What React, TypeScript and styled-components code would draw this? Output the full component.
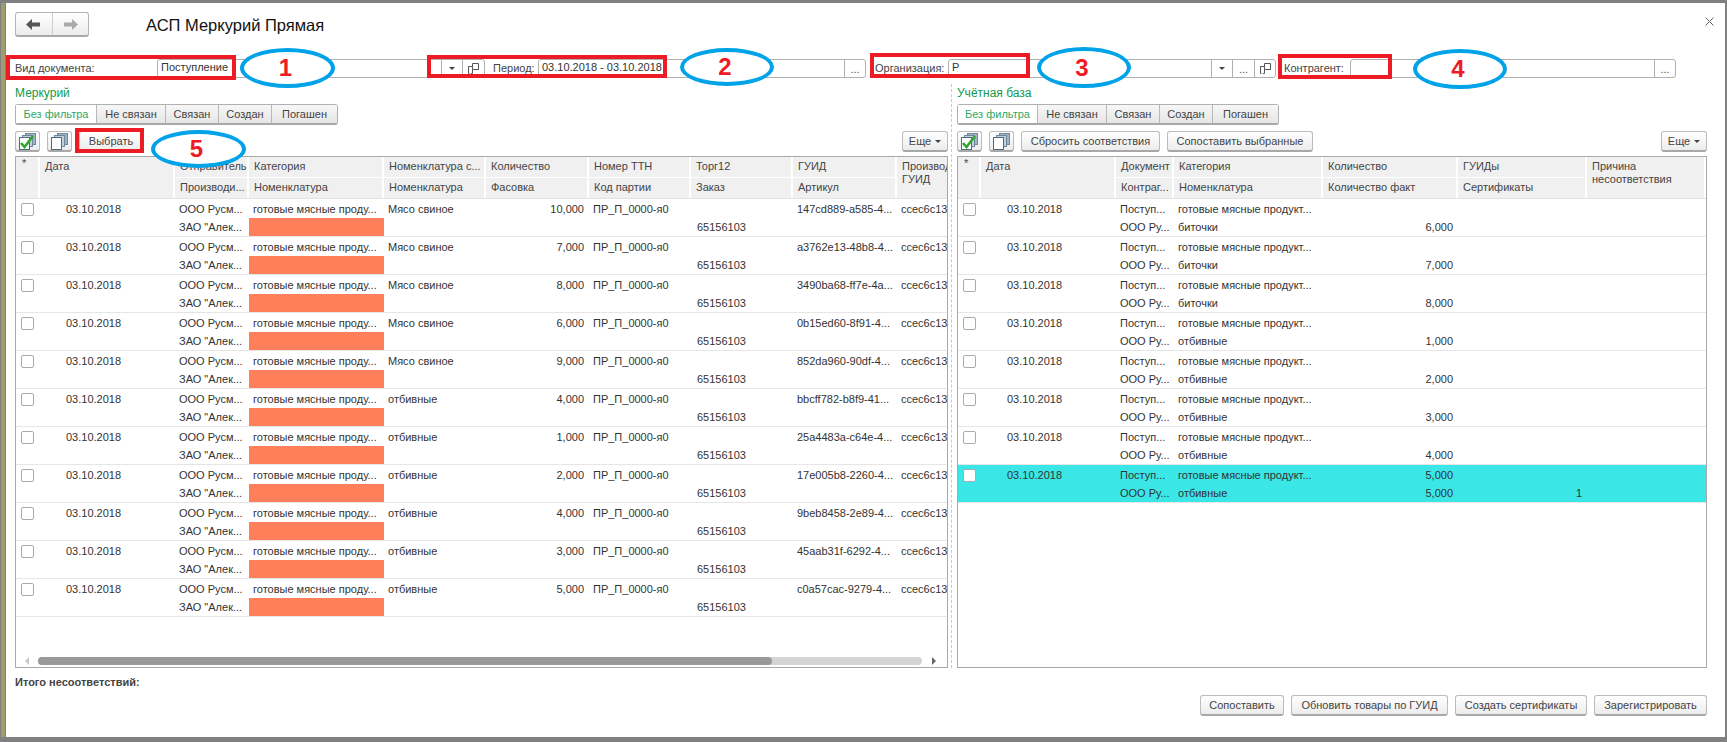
import styled, { createGlobalStyle } from "styled-components";

const GlobalStyle = createGlobalStyle`
  html, body { margin: 0; padding: 0; background: #fff; }
  body { font-family: "Liberation Sans", Arial, sans-serif; font-size: 11px; color: #333; }
  * { box-sizing: border-box; }
`;

const LEFT_COLS = "24px 135px 74px 135px 102px 103px 102px 102px 104px 80px";
const RIGHT_COLS = "23px 135px 58px 149px 135px 129px 119px";

const leftRows = [
  ["10,000", "Мясо свиное", "147cd889-a585-4..."],
  ["7,000", "Мясо свиное", "a3762e13-48b8-4..."],
  ["8,000", "Мясо свиное", "3490ba68-ff7e-4a..."],
  ["6,000", "Мясо свиное", "0b15ed60-8f91-4..."],
  ["9,000", "Мясо свиное", "852da960-90df-4..."],
  ["4,000", "отбивные", "bbcff782-b8f9-41..."],
  ["1,000", "отбивные", "25a4483a-c64e-4..."],
  ["2,000", "отбивные", "17e005b8-2260-4..."],
  ["4,000", "отбивные", "9beb8458-2e89-4..."],
  ["3,000", "отбивные", "45aab31f-6292-4..."],
  ["5,000", "отбивные", "c0a57cac-9279-4..."],
];

const rightRows = [
  ["6,000", "биточки"],
  ["7,000", "биточки"],
  ["8,000", "биточки"],
  ["1,000", "отбивные"],
  ["2,000", "отбивные"],
  ["3,000", "отбивные"],
  ["4,000", "отбивные"],
];

const redBoxes = [
  { x: 6, y: 55, w: 230, h: 25 },
  { x: 427, y: 55, w: 240, h: 23 },
  { x: 870, y: 53, w: 160, h: 25 },
  { x: 1278, y: 54, w: 114, h: 25 },
  { x: 75, y: 128, w: 69, h: 25 },
];

const callouts = [
  { n: 1, x: 240, y: 48, w: 95, h: 40 },
  { n: 2, x: 680, y: 48, w: 94, h: 38 },
  { n: 3, x: 1037, y: 47, w: 94, h: 41 },
  { n: 4, x: 1413, y: 49, w: 94, h: 40 },
  { n: 5, x: 151, y: 130, w: 95, h: 38 },
];

const BackArrow = ({ color }: { color: string }) => (
  <svg width="15" height="11" viewBox="0 0 15 11">
    <path d="M0 5.5 L6 0 V3.5 H14 V7.5 H6 V11 Z" fill={color} />
  </svg>
);

const ForwardArrow = ({ color }: { color: string }) => (
  <svg width="15" height="11" viewBox="0 0 15 11">
    <path d="M15 5.5 L9 0 V3.5 H1 V7.5 H9 V11 Z" fill={color} />
  </svg>
);

const OpenIcon = () => (
  <svg width="11" height="11" viewBox="0 0 11 11" fill="none" stroke="#555">
    <path d="M4.5 .5 H10.5 V6.5 H4.5 Z" />
    <path d="M4.5 3.5 H.5 V10.5 H1.5 M4.5 6.5 V10.5 H3" />
  </svg>
);

const CloseIcon = () => (
  <svg width="9" height="9" viewBox="0 0 9 9" stroke="#666" strokeWidth="1">
    <path d="M.5 .5 L8.5 8.5 M8.5 .5 L.5 8.5" />
  </svg>
);

const DocsIcon = ({ checked }: { checked?: boolean }) => (
  <svg width="18" height="17" viewBox="0 0 18 17">
    <rect x="6.5" y=".5" width="10" height="11" fill="#9fb4c4" stroke="#6f8798" />
    <rect x="3.5" y="2.5" width="10" height="11" fill="#c3d0da" stroke="#6f8798" />
    <rect x=".5" y="4.5" width="10" height="12" fill="#fff" stroke="#4f6b80" />
    {checked && (
      <path d="M2 10 L5.5 14 L14 3" fill="none" stroke="#2fa52f" strokeWidth="2.6" />
    )}
  </svg>
);

const Caret = styled.span`
  width: 0;
  height: 0;
  border-left: 3px solid transparent;
  border-right: 3px solid transparent;
  border-top: 3px solid #444;
`;

const App = () => (
  <Page>
    <GlobalStyle />
    <Sheet>
      <TitleBar>
        <NavGroup>
          <NavButton>
            <BackArrow color="#555" />
          </NavButton>
          <NavButton $next>
            <ForwardArrow color="#aaa" />
          </NavButton>
        </NavGroup>
        <Title>АСП Меркурий Прямая</Title>
        <CloseMark>
          <CloseIcon />
        </CloseMark>
      </TitleBar>

      <FilterRow>
        <FilterLabel $w={142}>Вид документа:</FilterLabel>
        <Field $w={328}>
          <FieldValue>Поступление</FieldValue>
          <FieldButton $w={21}>
            <Caret />
          </FieldButton>
          <FieldButton $w={22}>
            <OpenIcon />
          </FieldButton>
        </Field>
        <FilterLabel $w={45} $gap={8}>
          Период:
        </FilterLabel>
        <Field $w={328}>
          <FieldValue>03.10.2018 - 03.10.2018</FieldValue>
          <FieldButton $w={21}>...</FieldButton>
        </Field>
        <FilterLabel $w={73} $gap={9}>
          Организация:
        </FilterLabel>
        <Field $w={328}>
          <FieldValue>Р</FieldValue>
          <FieldButton $w={21}>
            <Caret />
          </FieldButton>
          <FieldButton $w={22}>...</FieldButton>
          <FieldButton $w={21}>
            <OpenIcon />
          </FieldButton>
        </Field>
        <FilterLabel $w={66} $gap={8}>
          Контрагент:
        </FilterLabel>
        <Field $w={326}>
          <FieldValue />
          <FieldButton $w={21}>...</FieldButton>
        </Field>
      </FilterRow>

      <Panels>
        <Panel $w={933}>
          <PanelTitle>Меркурий</PanelTitle>
          <Tabs>
            <Tab $w={80} $active>
              Без фильтра
            </Tab>
            <Tab $w={69}>Не связан</Tab>
            <Tab $w={53}>Связан</Tab>
            <Tab $w={53}>Создан</Tab>
            <Tab $w={66}>Погашен</Tab>
          </Tabs>
          <Toolbar>
            <IconButton>
              <DocsIcon checked />
            </IconButton>
            <IconButton>
              <DocsIcon />
            </IconButton>
            <PlainButton $w={64}>Выбрать</PlainButton>
            <MoreButton>
              Еще <Caret />
            </MoreButton>
          </Toolbar>
          <Table>
            <HeaderGrid $cols={LEFT_COLS}>
              <HeadCell $span $star>
                *
              </HeadCell>
              <HeadCell $span>Дата</HeadCell>
              <HeadCell>Отправитель</HeadCell>
              <HeadCell>Производи...</HeadCell>
              <HeadCell>Категория</HeadCell>
              <HeadCell>Номенклатура</HeadCell>
              <HeadCell>Номенклатура с...</HeadCell>
              <HeadCell>Номенклатура</HeadCell>
              <HeadCell>Количество</HeadCell>
              <HeadCell>Фасовка</HeadCell>
              <HeadCell>Номер ТТН</HeadCell>
              <HeadCell>Код партии</HeadCell>
              <HeadCell>Торг12</HeadCell>
              <HeadCell>Заказ</HeadCell>
              <HeadCell>ГУИД</HeadCell>
              <HeadCell>Артикул</HeadCell>
              <HeadCell $span>Производитель ГУИД</HeadCell>
            </HeaderGrid>
            {leftRows.map(([qty, name, guid]) => (
              <Row key={guid} $cols={LEFT_COLS}>
                <CheckCell>
                  <Checkbox />
                </CheckCell>
                <Cell />
                <DateCell>03.10.2018</DateCell>
                <Cell />
                <Cell>ООО Русм...</Cell>
                <Cell>ЗАО "Алек...</Cell>
                <Cell>готовые мясные проду...</Cell>
                <Cell $fill="#ff7f5a" />
                <Cell>{name}</Cell>
                <Cell />
                <Cell $right>{qty}</Cell>
                <Cell />
                <Cell>ПР_П_0000-я0</Cell>
                <Cell />
                <Cell />
                <Cell $inset={6}>65156103</Cell>
                <Cell>{guid}</Cell>
                <Cell />
                <Cell>ccec6c13</Cell>
                <Cell />
              </Row>
            ))}
            <Scrollbar>
              <ScrollArrow $dir="left" />
              <ScrollTrack>
                <ScrollThumb />
              </ScrollTrack>
              <ScrollArrow $dir="right" />
            </Scrollbar>
          </Table>
        </Panel>

        <Splitter />

        <Panel $w={750}>
          <PanelTitle>Учётная база</PanelTitle>
          <Tabs>
            <Tab $w={79} $active>
              Без фильтра
            </Tab>
            <Tab $w={69}>Не связан</Tab>
            <Tab $w={53}>Связан</Tab>
            <Tab $w={53}>Создан</Tab>
            <Tab $w={66}>Погашен</Tab>
          </Tabs>
          <Toolbar>
            <IconButton>
              <DocsIcon checked />
            </IconButton>
            <IconButton>
              <DocsIcon />
            </IconButton>
            <PlainButton $w={139}>Сбросить соответствия</PlainButton>
            <PlainButton $w={146}>Сопоставить выбранные</PlainButton>
            <MoreButton>
              Еще <Caret />
            </MoreButton>
          </Toolbar>
          <Table>
            <HeaderGrid $cols={RIGHT_COLS}>
              <HeadCell $span $star>
                *
              </HeadCell>
              <HeadCell $span>Дата</HeadCell>
              <HeadCell>Документ</HeadCell>
              <HeadCell>Контраг...</HeadCell>
              <HeadCell>Категория</HeadCell>
              <HeadCell>Номенклатура</HeadCell>
              <HeadCell>Количество</HeadCell>
              <HeadCell>Количество факт</HeadCell>
              <HeadCell>ГУИДы</HeadCell>
              <HeadCell>Сертификаты</HeadCell>
              <HeadCell $span>Причина несоответствия</HeadCell>
            </HeaderGrid>
            {rightRows.map(([qty, name], i) => (
              <Row key={i} $cols={RIGHT_COLS}>
                <CheckCell>
                  <Checkbox />
                </CheckCell>
                <Cell />
                <DateCell>03.10.2018</DateCell>
                <Cell />
                <Cell>Поступ...</Cell>
                <Cell>ООО Ру...</Cell>
                <Cell>готовые мясные продукт...</Cell>
                <Cell>{name}</Cell>
                <Cell />
                <Cell $right>{qty}</Cell>
              </Row>
            ))}
            <Row $cols={RIGHT_COLS} $selected>
              <CheckCell>
                <Checkbox />
              </CheckCell>
              <Cell />
              <DateCell>03.10.2018</DateCell>
              <Cell />
              <Cell>Поступ...</Cell>
              <Cell>ООО Ру...</Cell>
              <Cell>готовые мясные продукт...</Cell>
              <Cell>отбивные</Cell>
              <Cell $right>5,000</Cell>
              <Cell $right>5,000</Cell>
              <Cell />
              <Cell $right>1</Cell>
            </Row>
          </Table>
        </Panel>
      </Panels>

      <Summary>Итого несоответствий:</Summary>

      <Actions>
        <PlainButton $w={84}>Сопоставить</PlainButton>
        <PlainButton $w={157}>Обновить товары по ГУИД</PlainButton>
        <PlainButton $w={132}>Создать сертификаты</PlainButton>
        <PlainButton $w={113}>Зарегистрировать</PlainButton>
      </Actions>
    </Sheet>

    {redBoxes.map((b) => (
      <RedBox key={b.x} $x={b.x} $y={b.y} $w={b.w} $h={b.h} />
    ))}
    {callouts.map((c) => (
      <Callout key={c.n} $x={c.x} $y={c.y} $w={c.w} $h={c.h}>
        {c.n}
      </Callout>
    ))}
  </Page>
);

const Page = styled.div`
  position: relative;
  width: 1727px;
  height: 742px;
  overflow: hidden;
  background: #808080;
  padding: 3px 2px 5px 1px;
`;

const Sheet = styled.div`
  height: 100%;
  background: #fff;
  border-left: 4px solid #a09d6f;
  padding: 9px 18px 0 10px;
  display: flex;
  flex-direction: column;
  box-shadow: inset 1px 0 0 #808080;
`;

const TitleBar = styled.div`
  display: flex;
  align-items: center;
  height: 25px;
`;

const NavGroup = styled.div`
  display: flex;
  width: 74px;
  height: 25px;
  border: 1px solid #b5b5b5;
  border-bottom: 2px solid #a8a8a8;
  border-radius: 3px;
  background: linear-gradient(#fff, #ececec);
`;

const NavButton = styled.div<{ $next?: boolean }>`
  flex: 1;
  display: flex;
  align-items: center;
  justify-content: center;
  border-left: ${(p) => (p.$next ? "1px solid #cfcfcf" : "none")};
`;

const Title = styled.h1`
  margin: 1px 0 0 57px;
  font-size: 16.5px;
  font-weight: 400;
  color: #111;
`;

const CloseMark = styled.span`
  display: flex;
  margin-left: auto;
  margin-right: -7px;
  margin-top: -6px;
`;

const FilterRow = styled.div`
  display: flex;
  align-items: center;
  height: 19px;
  margin-top: 22px;
`;

const FilterLabel = styled.span<{ $w: number; $gap?: number }>`
  flex: none;
  width: ${(p) => p.$w}px;
  margin: 0 0 1px ${(p) => p.$gap ?? 0}px;
  white-space: nowrap;
  color: #444;
`;

const Field = styled.div<{ $w: number }>`
  flex: none;
  display: flex;
  width: ${(p) => p.$w}px;
  height: 19px;
  border: 1px solid #b0b0b0;
  border-radius: 3px;
  background: #fff;
`;

const FieldValue = styled.div`
  flex: 1;
  padding-left: 3px;
  line-height: 15px;
  color: #333;
`;

const FieldButton = styled.div<{ $w: number }>`
  flex: none;
  width: ${(p) => p.$w}px;
  display: flex;
  align-items: center;
  justify-content: center;
  border-left: 1px solid #b0b0b0;
  color: #555;
`;

const Panels = styled.div`
  display: flex;
  height: 584px;
  margin-top: 6px;
`;

const Panel = styled.section<{ $w: number }>`
  flex: none;
  width: ${(p) => p.$w}px;
  display: flex;
  flex-direction: column;
`;

const Splitter = styled.div`
  flex: none;
  width: 1px;
  margin: 0 5px 0 3px;
  border-left: 1px dashed #c8c8c8;
`;

const PanelTitle = styled.div`
  height: 20px;
  font-size: 12px;
  line-height: 18px;
  color: #119a4d;
`;

const Tabs = styled.div`
  display: flex;
  align-self: flex-start;
  height: 21px;
  border: 1px solid #b0b0b0;
  border-bottom: 2px solid #a8a8a8;
  border-radius: 3px;
`;

const Tab = styled.div<{ $w: number; $active?: boolean }>`
  width: ${(p) => p.$w}px;
  text-align: center;
  line-height: 18px;
  color: ${(p) => (p.$active ? "#2ea866" : "#444")};
  background: ${(p) => (p.$active ? "#fff" : "linear-gradient(#f7f7f7, #e6e6e6)")};
  & + & {
    border-left: 1px solid #b8b8b8;
  }
`;

const Toolbar = styled.div`
  display: flex;
  align-items: center;
  gap: 7px;
  height: 21px;
  margin-top: 6px;
`;

const IconButton = styled.div`
  flex: none;
  display: flex;
  align-items: center;
  justify-content: center;
  width: 25px;
  height: 21px;
  border: 1px solid #bcbcbc;
  border-bottom: 2px solid #a8a8a8;
  border-radius: 3px;
  background: linear-gradient(#fff, #ececec);
`;

const PlainButton = styled.div<{ $w: number }>`
  flex: none;
  width: ${(p) => p.$w}px;
  height: 21px;
  text-align: center;
  line-height: 18px;
  white-space: nowrap;
  color: #444;
  border: 1px solid #bcbcbc;
  border-bottom: 2px solid #a8a8a8;
  border-radius: 3px;
  background: linear-gradient(#fff, #ececec);
`;

const MoreButton = styled.div`
  flex: none;
  display: flex;
  align-items: center;
  justify-content: center;
  gap: 4px;
  width: 46px;
  height: 21px;
  margin-left: auto;
  color: #444;
  border: 1px solid #bcbcbc;
  border-bottom: 2px solid #a8a8a8;
  border-radius: 3px;
  background: linear-gradient(#fff, #ececec);
`;

const Table = styled.div`
  display: flex;
  flex-direction: column;
  height: 512px;
  margin-top: 4px;
  overflow: hidden;
  border: 1px solid #a9a9a9;
  background: #fff;
`;

const HeaderGrid = styled.div<{ $cols: string }>`
  flex: none;
  display: grid;
  grid-auto-flow: column;
  grid-template-columns: ${(p) => p.$cols};
  grid-template-rows: 20px 20px;
  row-gap: 1px;
  height: 42px;
  border-bottom: 1px solid #e2e2e2;
`;

const HeadCell = styled.div<{ $span?: boolean; $star?: boolean }>`
  grid-row: ${(p) => (p.$span ? "span 2" : "auto")};
  overflow: hidden;
  padding: ${(p) => (p.$star ? "0 0 0 6px" : "3px 0 0 5px")};
  line-height: 13px;
  color: #444;
  background: #f0f0f0;
  border-right: 2px solid #fff;
  white-space: ${(p) => (p.$span ? "normal" : "nowrap")};
`;

const Row = styled.div<{ $cols: string; $selected?: boolean }>`
  flex: none;
  display: grid;
  grid-auto-flow: column;
  grid-template-columns: ${(p) => p.$cols};
  grid-template-rows: 19px 18px;
  height: 38px;
  border-bottom: 1px solid #e6e6e6;
  background: ${(p) => (p.$selected ? "#3ae6e6" : "#fff")};
`;

const Cell = styled.div<{ $right?: boolean; $fill?: string; $inset?: number }>`
  padding: 0 ${(p) => (p.$right ? 5 : 0)}px 0 ${(p) => p.$inset ?? 4}px;
  overflow: hidden;
  line-height: 19px;
  white-space: nowrap;
  text-align: ${(p) => (p.$right ? "right" : "left")};
  background: ${(p) => p.$fill ?? "transparent"};
  color: #333;
  &:nth-child(odd) {
    line-height: 20px;
  }
`;

const DateCell = styled(Cell)`
  padding-left: 26px;
`;

const CheckCell = styled.div`
  padding: 4px 0 0 5px;
`;

const Checkbox = styled.div`
  width: 13px;
  height: 13px;
  border: 1px solid #aaa;
  border-radius: 2px;
  background: #fff;
`;

const Scrollbar = styled.div`
  display: flex;
  align-items: center;
  height: 8px;
  margin-top: auto;
  margin-bottom: 2px;
`;

const ScrollArrow = styled.span<{ $dir: "left" | "right" }>`
  flex: none;
  width: 0;
  height: 0;
  margin: ${(p) => (p.$dir === "left" ? "0 9px 0 9px" : "0 0 0 10px")};
  border-top: 4px solid transparent;
  border-bottom: 4px solid transparent;
  border-left: ${(p) => (p.$dir === "right" ? "4px solid #666" : "none")};
  border-right: ${(p) => (p.$dir === "left" ? "4px solid #c8c8c8" : "none")};
`;

const ScrollTrack = styled.div`
  flex: none;
  width: 884px;
  height: 8px;
  border-radius: 4px;
  background: #d4d4d4;
`;

const ScrollThumb = styled.div`
  width: 734px;
  height: 8px;
  border-radius: 4px;
  background: #999;
`;

const Summary = styled.div`
  height: 14px;
  margin-top: 7px;
  line-height: 14px;
  font-weight: 700;
  color: #444;
`;

const Actions = styled.div`
  display: flex;
  justify-content: flex-end;
  gap: 7px;
  margin-top: 6px;
`;

const RedBox = styled.div<{ $x: number; $y: number; $w: number; $h: number }>`
  position: absolute;
  left: ${(p) => p.$x}px;
  top: ${(p) => p.$y}px;
  width: ${(p) => p.$w}px;
  height: ${(p) => p.$h}px;
  border: 4px solid #ed1c24;
`;

const Callout = styled.div<{ $x: number; $y: number; $w: number; $h: number }>`
  position: absolute;
  left: ${(p) => p.$x}px;
  top: ${(p) => p.$y}px;
  width: ${(p) => p.$w}px;
  height: ${(p) => p.$h}px;
  display: flex;
  align-items: center;
  justify-content: center;
  padding-right: 4px;
  border: 4px solid #00a2e8;
  border-radius: 50%;
  background: #fff;
  font-size: 24px;
  font-weight: 700;
  color: #ed1c24;
`;

export default App;
